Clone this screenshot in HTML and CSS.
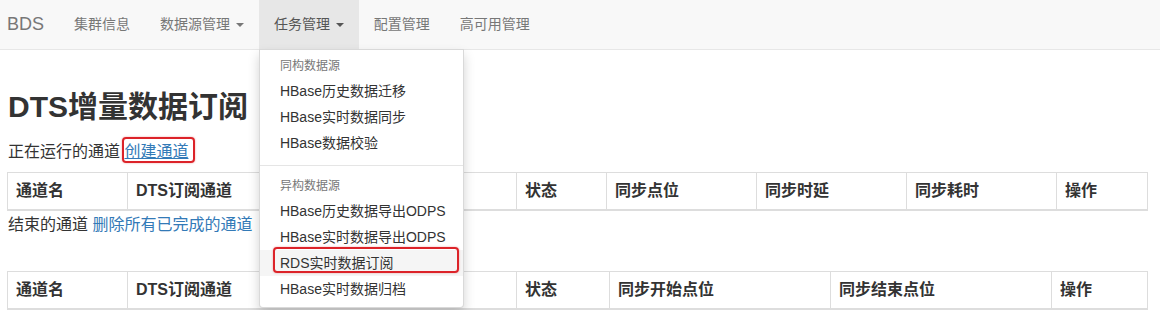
FILE: index.html
```html
<!DOCTYPE html>
<html lang="zh-CN">
<head>
    <meta charset="UTF-8">
    <meta name="viewport" content="width=device-width, initial-scale=1.0">
    <title>BDS</title>
    <link rel="stylesheet" href="styles.css">
</head>
<body>
    <nav class="navbar">
        <a class="brand" href="#">BDS</a>
        <ul class="nav">
            <li><a href="#">集群信息</a></li>
            <li><a href="#">数据源管理 <span class="caret"></span></a></li>
            <li class="open">
                <a href="#">任务管理 <span class="caret"></span></a>
                <ul class="dropdown">
                    <li class="dropdown-header">同构数据源</li>
                    <li><a href="#">HBase历史数据迁移</a></li>
                    <li><a href="#">HBase实时数据同步</a></li>
                    <li><a href="#">HBase数据校验</a></li>
                    <li class="divider"></li>
                    <li class="dropdown-header">异构数据源</li>
                    <li><a href="#">HBase历史数据导出ODPS</a></li>
                    <li><a href="#">HBase实时数据导出ODPS</a></li>
                    <li class="hover"><a class="callout" href="#">RDS实时数据订阅</a></li>
                    <li><a href="#">HBase实时数据归档</a></li>
                </ul>
            </li>
            <li><a href="#">配置管理</a></li>
            <li><a href="#">高可用管理</a></li>
        </ul>
    </nav>

    <div class="page">
        <h1>DTS增量数据订阅</h1>
        <p class="running">正在运行的通道 <a class="mark" href="#">创建通道</a></p>
        <table class="grid">
            <colgroup>
                <col style="width:120px"><col style="width:229px"><col style="width:160px"><col style="width:90px">
                <col style="width:150px"><col style="width:150px"><col style="width:150px"><col style="width:91px">
            </colgroup>
            <thead>
                <tr>
                    <th>通道名</th>
                    <th>DTS订阅通道</th>
                    <th></th>
                    <th>状态</th>
                    <th>同步点位</th>
                    <th>同步时延</th>
                    <th>同步耗时</th>
                    <th>操作</th>
                </tr>
            </thead>
            <tbody></tbody>
        </table>

        <p class="finished">结束的通道 <a href="#">删除所有已完成的通道</a></p>
        <table class="grid">
            <colgroup>
                <col style="width:120px"><col style="width:229px"><col style="width:160px"><col style="width:93px">
                <col style="width:221px"><col style="width:221px"><col style="width:96px">
            </colgroup>
            <thead>
                <tr>
                    <th>通道名</th>
                    <th>DTS订阅通道</th>
                    <th></th>
                    <th>状态</th>
                    <th>同步开始点位</th>
                    <th>同步结束点位</th>
                    <th>操作</th>
                </tr>
            </thead>
            <tbody></tbody>
        </table>
    </div>
</body>
</html>
```

FILE: styles.css
```css
body {
    margin: 0;
    font-family: "Liberation Sans", "Noto Sans CJK SC", sans-serif;
    font-size: 14px;
    line-height: 20px;
    color: #333;
    background-color: #fff;
}
a {
    color: #337ab7;
    text-decoration: none;
}

/* top navbar */
.navbar {
    display: flex;
    height: 49px;
    background-color: #f8f8f8;
    border-bottom: 1px solid #e7e7e7;
}
.brand {
    padding: 14px 15px 15px 7px;
    font-size: 18px;
    color: #777;
}
.nav {
    display: flex;
    margin: 0;
    padding: 0;
    list-style: none;
}
.nav > li {
    position: relative;
}
.nav > li > a {
    display: block;
    padding: 14px 15px 15px;
    color: #777;
}
.nav > li.open > a {
    background-color: #e7e7e7;
    color: #555;
}
.caret {
    display: inline-block;
    width: 0;
    height: 0;
    margin-left: 2px;
    vertical-align: middle;
    border-top: 4px solid;
    border-left: 4px solid transparent;
    border-right: 4px solid transparent;
}

/* dropdown menu */
.dropdown {
    position: absolute;
    top: 100%;
    left: 0;
    z-index: 10;
    box-sizing: border-box;
    width: 205px;
    margin: 0;
    padding: 5px 0;
    list-style: none;
    background-color: #fff;
    border: 1px solid rgba(0, 0, 0, 0.15);
    border-radius: 0 0 4px 4px;
    box-shadow: 0 6px 12px rgba(0, 0, 0, 0.175);
}
.dropdown > li > a {
    display: block;
    padding: 3px 20px;
    color: #333;
    white-space: nowrap;
}
.dropdown > li.hover > a {
    background-color: #f5f5f5;
}
.dropdown-header {
    padding: 3px 20px;
    font-size: 12px;
    line-height: 17px;
    color: #777;
}
.divider {
    height: 1px;
    margin: 9px 0;
    background-color: #e5e5e5;
}

/* red annotation boxes */
.callout {
    position: relative;
}
.callout::after {
    content: "";
    position: absolute;
    left: 13px;
    right: 4px;
    top: -3px;
    bottom: 3px;
    border: 2px solid #dc2329;
    border-radius: 4px;
    box-shadow: 0 0 2px rgba(220, 35, 41, 0.45);
}
.mark {
    position: relative;
    text-decoration: underline;
}
.mark::after {
    content: "";
    position: absolute;
    left: -2px;
    right: -7px;
    top: -6px;
    bottom: -3px;
    border: 2px solid #dc2329;
    border-radius: 4px;
    box-shadow: 0 0 2px rgba(220, 35, 41, 0.45);
}

/* page body */
.page {
    padding: 0 12px 0 7px;
}
h1 {
    margin: 40px 0 0 1px;
    font-size: 30px;
    line-height: 33px;
    font-weight: bold;
}
.running,
.finished {
    font-size: 16px;
}
.running {
    margin: 19px 0 10px 1px;
}
.finished {
    margin: 4px 0 36px 1px;
}
.grid {
    width: 1141px;
    table-layout: fixed;
    border-collapse: collapse;
}
.grid th {
    padding: 8px;
    text-align: left;
    font-size: 16px;
    font-weight: bold;
    border: 1px solid #ddd;
    border-bottom-width: 2px;
    white-space: nowrap;
    overflow: hidden;
}
```
